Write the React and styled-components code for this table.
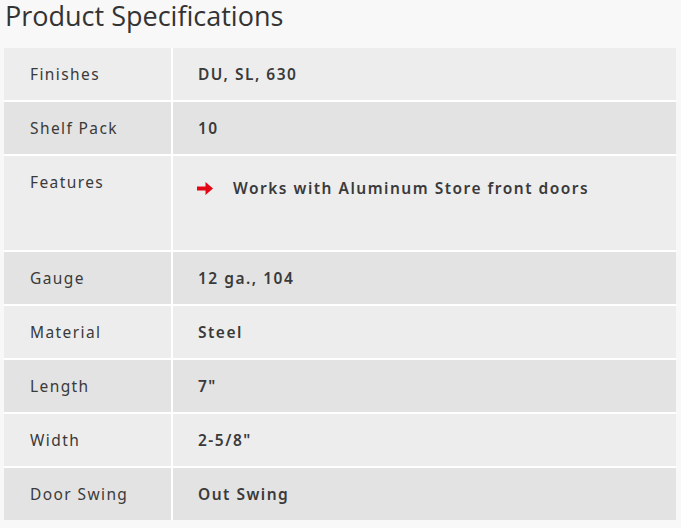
import React from 'react';
import styled, { createGlobalStyle } from 'styled-components';

const GlobalStyle = createGlobalStyle`
  body {
    margin: 0;
    background: #f8f8f8;
    font-family: 'Open Sans', 'Liberation Sans', sans-serif;
  }
`;

const Page = styled.div`
  padding: 0 5px 0 4px;
`;

const Title = styled.h2`
  margin: 0 0 0 1px;
  font-size: 27px;
  font-weight: 400;
  line-height: 31px;
  color: #333;
`;

const Specs = styled.div`
  margin-top: 17px;
  display: grid;
  grid-template-columns: 167px 1fr;
  gap: 2px;
  background: #fff;
`;

const Cell = styled.div`
  background: ${p => (p.$alt ? '#e3e3e3' : '#ededed')};
  min-height: ${p => (p.$tall ? '94px' : '52px')};
  box-sizing: border-box;
  padding: 16px 0 16px ${p => (p.$value ? '25px' : '26px')};
  font-family: 'Noto Sans', 'Open Sans', sans-serif;
  font-size: 15.5px;
  line-height: 20px;
  letter-spacing: ${p => (p.$value ? '1.5px' : '1.4px')};
  color: #3a3a3a;
  font-weight: ${p => (p.$value ? 600 : 400)};
`;

const Feature = styled.div`
  display: flex;
  align-items: center;
  gap: 20px;
  margin-left: -1px;
  padding-top: 6px;
`;

const Arrow = styled.svg`
  width: 16px;
  height: 13px;
  flex: none;
`;

const rows = [
  ['Finishes', 'DU, SL, 630'],
  ['Shelf Pack', '10'],
  ['Features', null],
  ['Gauge', '12 ga., 104'],
  ['Material', 'Steel'],
  ['Length', '7"'],
  ['Width', '2-5/8"'],
  ['Door Swing', 'Out Swing'],
];

const App = () => (
  <Page>
    <GlobalStyle />
    <Title>Product Specifications</Title>
    <Specs>
      {rows.map(([label, value], i) => {
        const alt = i % 2 === 1;
        const tall = value === null;
        return (
          <React.Fragment key={label}>
            <Cell $alt={alt} $tall={tall}>{label}</Cell>
            <Cell $alt={alt} $tall={tall} $value>
              {tall ? (
                <Feature>
                  <Arrow viewBox="0 0 16 13">
                    <path d="M0 4.5h8.5V0L16 6.5 8.5 13V8.5H0z" fill="#e30613" />
                  </Arrow>
                  Works with Aluminum Store front doors
                </Feature>
              ) : (
                value
              )}
            </Cell>
          </React.Fragment>
        );
      })}
    </Specs>
  </Page>
);

export default App;
